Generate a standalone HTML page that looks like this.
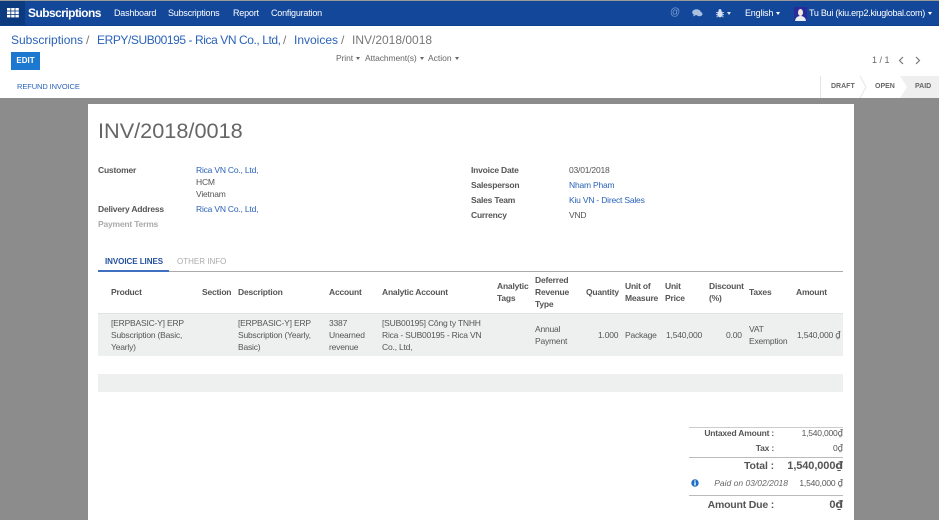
<!DOCTYPE html>
<html><head><meta charset="utf-8">
<style>
html,body{margin:0;padding:0;width:939px;height:520px;overflow:hidden;background:#fff}
body{position:relative;font-family:"Liberation Sans",sans-serif;font-size:8.5px;letter-spacing:-.2px;color:#555}
#w{position:absolute;left:0;top:0;width:939px;height:520px;overflow:hidden;filter:blur(.25px)}
.a{position:absolute;white-space:nowrap;line-height:12px}
.b{font-weight:bold;color:#555}
.l{color:#2a62b8}
.n{color:#fff;font-size:9px;letter-spacing:-.2px}
.r{text-align:right}
.d{font-family:"DejaVu Sans",sans-serif;letter-spacing:0}
.bc{font-size:12px;line-height:15px;letter-spacing:0;color:#777;top:33px}
.st{top:81px;font-size:7px;font-weight:bold;color:#666;letter-spacing:0}
.car{display:inline-block;width:0;height:0;border-left:2.5px solid transparent;border-right:2.5px solid transparent;border-top:3px solid currentColor;vertical-align:middle;margin-left:3px}
.box{position:absolute}
</style></head><body><div id="w">
<div class="box" style="left:0;top:0;width:939px;height:1px;background:#999"></div>
<div class="box" style="left:0;top:1px;width:939px;height:24px;background:#12479a"></div>
<div class="box" style="left:0;top:25px;width:939px;height:1px;background:#0d3f8e"></div>
<div class="box" style="left:0;top:1px;width:25px;height:24px;background:#0c3a7f"></div>
<svg class="box" style="left:7px;top:8px" width="12" height="10" fill="#fff"><rect x="0" y="0" width="3.4" height="2.6"/><rect x="4.200" y="0" width="3.4" height="2.6"/><rect x="8.400" y="0" width="3.4" height="2.6"/><rect x="0" y="3.400" width="3.4" height="2.6"/><rect x="4.200" y="3.400" width="3.4" height="2.6"/><rect x="8.400" y="3.400" width="3.4" height="2.6"/><rect x="0" y="6.800" width="3.4" height="2.6"/><rect x="4.200" y="6.800" width="3.4" height="2.6"/><rect x="8.400" y="6.800" width="3.4" height="2.6"/></svg>
<div class="a" style="left:28px;top:7px;color:#fff;font-size:12px;font-weight:bold;letter-spacing:-.55px">Subscriptions</div>
<div class="a n" style="left:114px;top:7px">Dashboard</div>
<div class="a n" style="left:168px;top:7px">Subscriptions</div>
<div class="a n" style="left:233px;top:7px">Report</div>
<div class="a n" style="left:271px;top:7px">Configuration</div>
<div class="a" style="left:670px;top:7px;color:#7f9fd0;font-size:10px;letter-spacing:0">@</div>
<svg class="box" style="left:692px;top:9px" width="11" height="9" fill="#a9bfe0"><ellipse cx="4.5" cy="3.2" rx="4.3" ry="3"/><path d="M2 5l-1 2.5 3-1.5z"/><ellipse cx="7.500" cy="5" rx="3" ry="2.300"/></svg>
<svg class="box" style="left:716px;top:9px" width="8" height="9" fill="#d6e0f0"><ellipse cx="4" cy="5" rx="2.600" ry="3.400"/><circle cx="4" cy="1.600" r="1.500"/><path d="M0 3h8v.8H0zM0 5.300h8v.8H0zM.3 8l1.500-1.500.5.5L.8 8.500zM7.700 8 6.200 6.500l-.5.5 1.500 1.500z"/></svg>
<div class="a" style="left:725px;top:7px;color:#d6e0f0"><span class="car" style="margin-left:2px"></span></div>
<div class="a n" style="left:745px;top:7px">English<span class="car"></span></div>
<div class="box" style="left:794px;top:7px;width:13px;height:14px;background:#2a2a9a;overflow:hidden">
<div class="box" style="left:4px;top:2px;width:5px;height:7px;border-radius:50%;background:#f2ead8"></div>
<div class="box" style="left:1px;top:9px;width:11px;height:6px;border-radius:5px 5px 0 0;background:#e8eef6"></div></div>
<div class="a n" style="left:809px;top:7px;letter-spacing:-.25px">Tu Bui (kiu.erp2.kiuglobal.com)<span class="car"></span></div>

<div class="a bc" style="left:11px;color:#2a62b8">Subscriptions</div>
<div class="a bc" style="left:86px">/</div>
<div class="a bc" style="left:97px;color:#2a62b8;letter-spacing:-.42px">ERPY/SUB00195 - Rica VN Co., Ltd,</div>
<div class="a bc" style="left:283px">/</div>
<div class="a bc" style="left:294px;color:#2a62b8">Invoices</div>
<div class="a bc" style="left:341px">/</div>
<div class="a bc" style="left:352px">INV/2018/0018</div>
<div class="box" style="left:11px;top:52px;width:29px;height:18px;background:#1d79d0"></div>
<div class="a" style="left:11px;top:55px;width:29px;text-align:center;color:#fff;font-size:8px;font-weight:bold;letter-spacing:0">EDIT</div>
<div class="a" style="left:336px;top:52px;color:#666;letter-spacing:-.1px">Print<span class="car"></span></div>
<div class="a" style="left:365px;top:52px;color:#666;letter-spacing:-.1px">Attachment(s)<span class="car"></span></div>
<div class="a" style="left:428px;top:52px;color:#666;letter-spacing:0">Action<span class="car"></span></div>
<div class="a" style="left:872px;top:54px;font-size:9px;color:#666;letter-spacing:0">1 / 1</div>
<svg class="box" style="left:897px;top:56px" width="30" height="9" fill="none" stroke="#777" stroke-width="1.200"><path d="M6 1 2.500 4.500 6 8"/><path d="M19 1l3.500 3.500L19 8"/></svg>
<div class="a" style="left:17px;top:81px;font-size:7.5px;letter-spacing:-.1px;color:#2a62b8">REFUND INVOICE</div>

<svg class="box" style="left:820px;top:76px" width="119" height="22"><rect width="119" height="22" fill="#fff"/><path d="M0.500 0V22" stroke="#e4e4e4"/><path d="M80 0H119V22H80L87 11z" fill="#efefef"/><path d="M40 0l6 11-6 11" fill="none" stroke="#e6e6e6"/></svg>
<div class="a st" style="left:831px">DRAFT</div>
<div class="a st" style="left:875px">OPEN</div>
<div class="a st" style="left:915px">PAID</div>

<div class="box" style="left:0;top:98px;width:939px;height:422px;background:#8c8c8c"></div>
<div class="box" style="left:88px;top:104px;width:766px;height:416px;background:#fff"></div>

<div class="a" style="left:98px;top:118px;font-size:21.700px;line-height:26px;color:#666;letter-spacing:0">INV/2018/0018</div>

<div class="a b" style="left:98px;top:164px">Customer</div>
<div class="a l" style="left:196px;top:164px">Rica VN Co., Ltd,</div>
<div class="a" style="left:196px;top:176px">HCM</div>
<div class="a" style="left:196px;top:188px">Vietnam</div>
<div class="a b" style="left:98px;top:203px">Delivery Address</div>
<div class="a l" style="left:196px;top:203px">Rica VN Co., Ltd,</div>
<div class="a b" style="left:98px;top:218px;color:#aaa">Payment Terms</div>

<div class="a b" style="left:471px;top:164px">Invoice Date</div>
<div class="a" style="left:569px;top:164px">03/01/2018</div>
<div class="a b" style="left:471px;top:179px">Salesperson</div>
<div class="a l" style="left:569px;top:179px">Nham Pham</div>
<div class="a b" style="left:471px;top:194px">Sales Team</div>
<div class="a l" style="left:569px;top:194px">Kiu VN - Direct Sales</div>
<div class="a b" style="left:471px;top:209px">Currency</div>
<div class="a" style="left:569px;top:209px">VND</div>

<div class="a" style="left:105px;top:255.500px;font-size:8px;font-weight:bold;color:#24509f;letter-spacing:-.05px">INVOICE LINES</div>
<div class="a" style="left:177px;top:255.500px;font-size:8px;color:#aaa;letter-spacing:0">OTHER INFO</div>
<div class="box" style="left:98px;top:271px;width:745px;height:1px;background:#aaa"></div>
<div class="box" style="left:98px;top:270px;width:71px;height:2px;background:#3f70c0"></div>

<div class="a b" style="left:111px;top:286px">Product</div>
<div class="a b" style="left:202px;top:286px">Section</div>
<div class="a b" style="left:238px;top:286px">Description</div>
<div class="a b" style="left:329px;top:286px">Account</div>
<div class="a b" style="left:382px;top:286px">Analytic Account</div>
<div class="a b" style="left:497px;top:280px">Analytic<br>Tags</div>
<div class="a b" style="left:535px;top:274px">Deferred<br>Revenue<br>Type</div>
<div class="a b" style="left:586px;top:286px">Quantity</div>
<div class="a b" style="left:625px;top:280px">Unit of<br>Measure</div>
<div class="a b" style="left:665px;top:280px">Unit<br>Price</div>
<div class="a b" style="left:709px;top:280px">Discount<br>(%)</div>
<div class="a b" style="left:749px;top:286px">Taxes</div>
<div class="a b" style="left:796px;top:286px">Amount</div>

<div class="box" style="left:98px;top:313px;width:745px;height:43px;background:#eef0f0;border-top:1px solid #e2e2e2;box-sizing:border-box"></div>
<div class="a" style="left:111px;top:317px">[ERPBASIC-Y] ERP<br>Subscription (Basic,<br>Yearly)</div>
<div class="a" style="left:238px;top:317px">[ERPBASIC-Y] ERP<br>Subscription (Yearly,<br>Basic)</div>
<div class="a" style="left:329px;top:317px">3387<br>Unearned<br>revenue</div>
<div class="a" style="left:382px;top:317px">[SUB00195] Công ty TNHH<br>Rica - SUB00195 - Rica VN<br>Co., Ltd,</div>
<div class="a" style="left:535px;top:323px">Annual<br>Payment</div>
<div class="a" style="left:598px;top:329px">1.000</div>
<div class="a" style="left:625px;top:329px">Package</div>
<div class="a" style="left:666px;top:329px">1,540,000</div>
<div class="a" style="left:726px;top:329px">0.00</div>
<div class="a" style="left:749px;top:323px">VAT<br>Exemption</div>
<div class="a" style="left:797px;top:329px">1,540,000 <span class="d">₫</span></div>

<div class="box" style="left:98px;top:374px;width:745px;height:18px;background:#eef0f0"></div>

<div class="box" style="left:689px;top:427px;width:154px;height:1px;background:#ccc"></div>
<div class="a b r" style="left:680px;top:427px;width:94px">Untaxed Amount :</div>
<div class="a r" style="left:763px;top:427px;width:80px">1,540,000<span class="d">₫</span></div>
<div class="a b r" style="left:680px;top:442px;width:94px">Tax :</div>
<div class="a r" style="left:763px;top:442px;width:80px">0<span class="d">₫</span></div>
<div class="box" style="left:689px;top:457px;width:154px;height:1px;background:#bbb"></div>
<div class="a b r" style="left:680px;top:459px;width:94px;font-size:10.500px;line-height:14px;letter-spacing:-.1px">Total :</div>
<div class="a b r" style="left:763px;top:459px;width:80px;font-size:11px;line-height:14px;letter-spacing:-.1px">1,540,000<span class="d">₫</span></div>
<svg class="box" style="left:691px;top:479px" width="8" height="8"><circle cx="4" cy="4" r="3.700" fill="#1d6fc4"/><rect x="3.300" y="1.400" width="1.400" height="1.200" fill="#fff"/><rect x="3.300" y="3.200" width="1.400" height="3.300" fill="#fff"/></svg>
<div class="a r" style="left:688px;top:477px;width:100px;font-size:8.500px;font-style:italic;color:#666;letter-spacing:0">Paid on 03/02/2018</div>
<div class="a r" style="left:763px;top:477px;width:80px">1,540,000 <span class="d">₫</span></div>
<div class="box" style="left:689px;top:495px;width:154px;height:1px;background:#bbb"></div>
<div class="a b r" style="left:680px;top:498px;width:94px;font-size:10.500px;line-height:14px">Amount Due :</div>
<div class="a b r" style="left:763px;top:498px;width:80px;font-size:11px;line-height:14px;letter-spacing:-.1px">0<span class="d">₫</span></div>
</div></body></html>
